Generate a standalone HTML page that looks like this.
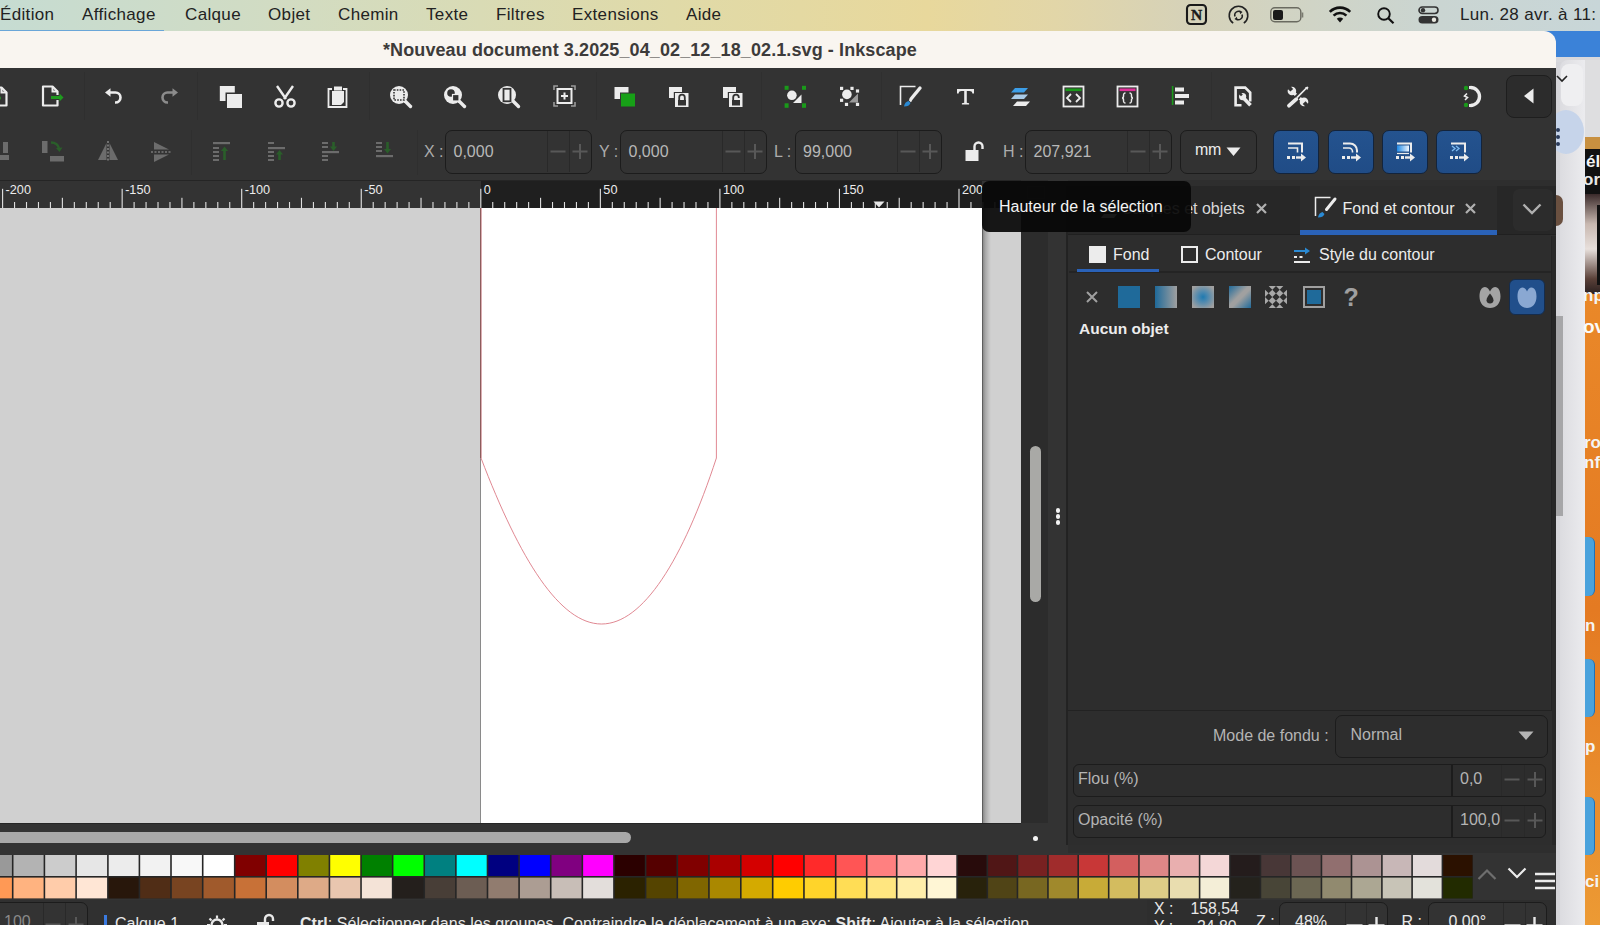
<!DOCTYPE html><html><head><meta charset="utf-8"><style>
*{margin:0;padding:0;box-sizing:border-box}
html,body{width:1600px;height:925px;overflow:hidden;background:#2e2e2e;font-family:"Liberation Sans",sans-serif}
.a{position:absolute}
.t{position:absolute;white-space:nowrap}
svg{position:absolute;overflow:visible}
</style></head><body>
<div class="a" style="left:1556px;top:31px;width:44px;height:894px;background:linear-gradient(90deg,#d4d4d8,#e6e6ea)"></div>
<div class="a" style="left:1530px;top:31px;width:70px;height:29px;background:#3b82d8"></div>
<div class="a" style="left:1556px;top:57px;width:44px;height:5px;background:#d8d8dc"></div>
<div class="a" style="left:1560px;top:60px;width:26px;height:865px;background:linear-gradient(90deg,#dcdce0,#ececef);border-top-left-radius:8px"></div>
<div class="a" style="left:1561px;top:64px;width:22px;height:42px;background:#efeff1;border-radius:8px"></div>
<svg style="left:1556px;top:74px" width="12" height="10" viewBox="0 0 12 10"><path d="M1 2l5 5 5-5" fill="none" stroke="#222" stroke-width="1.6"/></svg>
<div class="a" style="left:1548px;top:110px;width:36px;height:44px;border-radius:50%;background:#c6d4ea"></div>
<div class="a" style="left:1556px;top:316px;width:7px;height:200px;background:#a6a6a8"></div>
<div class="a" style="left:1556px;top:128px;width:4px;height:4px;border-radius:50%;background:#2a3a5a"></div>
<div class="a" style="left:1556px;top:135px;width:4px;height:4px;border-radius:50%;background:#2a3a5a"></div>
<div class="a" style="left:1556px;top:142px;width:4px;height:4px;border-radius:50%;background:#2a3a5a"></div>
<div class="a" style="left:1585px;top:60px;width:15px;height:77px;background:#dedee0"></div>
<div class="a" style="left:1585px;top:137px;width:15px;height:788px;background:linear-gradient(180deg,#ec8f2c,#e47a22 60%,#ec9a34)"></div>
<div class="a" style="left:1585px;top:137px;width:15px;height:12px;background:#c89040"></div>
<div class="a" style="left:1585px;top:149px;width:15px;height:45px;background:#111"></div>
<div class="t" style="left:1586px;top:152px;font-size:17px;font-weight:bold;color:#f4f4f4">éli</div>
<div class="t" style="left:1583px;top:170px;font-size:17px;font-weight:bold;color:#e8e8e8">or</div>
<div class="a" style="left:1585px;top:194px;width:15px;height:100px;background:linear-gradient(180deg,#3a2a2a,#c8b8b0 30%,#e8e0dc 55%,#5a4038 85%,#2a2020)"></div>
<div class="a" style="left:1597px;top:205px;width:3px;height:80px;background:#111"></div>
<div class="t" style="left:1583px;top:286px;font-size:17px;font-weight:bold;color:#f4f4f4">np</div>
<div class="t" style="left:1583px;top:316px;font-size:19px;font-weight:bold;color:#fafafa">ov</div>
<div class="t" style="left:1584px;top:433px;font-size:17px;font-weight:bold;color:#f4f4f4">ro</div>
<div class="t" style="left:1584px;top:453px;font-size:17px;font-weight:bold;color:#f4f4f4">nfi</div>
<div class="t" style="left:1585px;top:616px;font-size:17px;font-weight:bold;color:#f4f4f4">n</div>
<div class="t" style="left:1585px;top:737px;font-size:17px;font-weight:bold;color:#f4f4f4">p</div>
<div class="t" style="left:1585px;top:872px;font-size:17px;font-weight:bold;color:#f4f4f4">ci</div>
<div class="a" style="left:1585px;top:537px;width:10px;height:59px;background:#4aa2dc;border-radius:0 6px 6px 0;border-right:1.5px solid #1e70b8"></div>
<div class="a" style="left:1585px;top:659px;width:10px;height:58px;background:#4aa2dc;border-radius:0 6px 6px 0;border-right:1.5px solid #1e70b8"></div>
<div class="a" style="left:1585px;top:797px;width:10px;height:58px;background:#4aa2dc;border-radius:0 6px 6px 0;border-right:1.5px solid #1e70b8"></div>
<div class="a" style="left:0;top:0;width:1600px;height:31px;background:linear-gradient(90deg,#c6dcd2 0%,#d2dcc2 18%,#e0daa8 42%,#e8d89c 58%,#e2d6a8 66%,#d6d2b8 74%,#d0d4c6 82%,#cad5d2 90%,#c8d6d8 100%)"></div>
<div class="a" style="left:0;top:30px;width:164px;height:2px;background:#6aa6d8"></div>
<div class="t" style="left:0px;top:5px;font-size:17px;letter-spacing:0.35px;color:#222">Édition</div>
<div class="t" style="left:82px;top:5px;font-size:17px;letter-spacing:0.35px;color:#222">Affichage</div>
<div class="t" style="left:185px;top:5px;font-size:17px;letter-spacing:0.35px;color:#222">Calque</div>
<div class="t" style="left:268px;top:5px;font-size:17px;letter-spacing:0.35px;color:#222">Objet</div>
<div class="t" style="left:338px;top:5px;font-size:17px;letter-spacing:0.35px;color:#222">Chemin</div>
<div class="t" style="left:426px;top:5px;font-size:17px;letter-spacing:0.35px;color:#222">Texte</div>
<div class="t" style="left:496px;top:5px;font-size:17px;letter-spacing:0.35px;color:#222">Filtres</div>
<div class="t" style="left:572px;top:5px;font-size:17px;letter-spacing:0.35px;color:#222">Extensions</div>
<div class="t" style="left:686px;top:5px;font-size:17px;letter-spacing:0.35px;color:#222">Aide</div>
<div class="t" style="left:1460px;top:5px;font-size:17px;letter-spacing:0.35px;color:#222">Lun. 28 avr. à 11:</div>
<svg style="left:1186px;top:4px" width="21" height="21" viewBox="0 0 21 21"><rect x="1" y="1" width="19" height="19" rx="3.5" fill="none" stroke="#1a1a1a" stroke-width="2.1"/><text x="10.5" y="16" font-family="Liberation Serif" font-weight="bold" font-size="15.5" text-anchor="middle" fill="#1a1a1a" stroke="#1a1a1a" stroke-width="0.4">N</text></svg>
<svg style="left:1228px;top:5px" width="21" height="21" viewBox="0 0 21 21"><path d="M5.2 18.2A9.3 9.3 0 1 1 15.8 18.2" fill="none" stroke="#222" stroke-width="1.6"/><path d="M7 11.5A3.8 3.8 0 0 1 13 7.2" fill="none" stroke="#222" stroke-width="1.5"/><path d="M14 9.5A3.8 3.8 0 0 1 8 13.8" fill="none" stroke="#222" stroke-width="1.5"/><path d="M11.5 5.2l3 1.8-2.4 2.2z" fill="#222"/><path d="M9.5 15.8l-3-1.8 2.4-2.2z" fill="#222"/></svg>
<svg style="left:1270px;top:7px" width="35" height="16" viewBox="0 0 35 16"><rect x="0.8" y="0.8" width="30" height="14" rx="4" fill="none" stroke="#6a6a60" stroke-width="1.4"/><rect x="3" y="3" width="10" height="10" rx="2" fill="#1a1a1a"/><path d="M32.5 5.5v5" stroke="#7a7a70" stroke-width="1.6"/></svg>
<svg style="left:1328px;top:6px" width="24" height="17" viewBox="0 0 24 17"><path d="M12 16.5 L8.8 12.8 A4.5 4.5 0 0 1 15.2 12.8 Z" fill="#111"/><path d="M5.6 9.6 A9 9 0 0 1 18.4 9.6" fill="none" stroke="#111" stroke-width="2.6"/><path d="M1.8 5.8 A14.5 14.5 0 0 1 22.2 5.8" fill="none" stroke="#111" stroke-width="2.6"/></svg>
<svg style="left:1377px;top:7px" width="18" height="17" viewBox="0 0 18 17"><circle cx="7" cy="7" r="5.8" fill="none" stroke="#111" stroke-width="1.9"/><path d="M11.3 11.3 L16.5 16.3" stroke="#111" stroke-width="2.2"/></svg>
<svg style="left:1418px;top:6px" width="21" height="18" viewBox="0 0 21 18"><rect x="1" y="1" width="19" height="6.5" rx="3.25" fill="none" stroke="#333" stroke-width="1.6"/><circle cx="5" cy="4.25" r="2.2" fill="#333"/><rect x="0.5" y="10" width="20" height="7.5" rx="3.75" fill="#333"/><circle cx="16" cy="13.75" r="2.2" fill="#e8e8e0"/></svg>
<div class="a" style="left:0;top:31px;width:1556px;height:37px;background:#f9f5f0;border-top-right-radius:12px"></div>
<div class="t" style="left:383px;top:40px;font-size:18px;font-weight:bold;letter-spacing:0.1px;color:#3d3b3a">*Nouveau document 3.2025_04_02_12_18_02.1.svg - Inkscape</div>
<div class="a" style="left:0;top:68px;width:1556px;height:112px;background:#333333"></div>
<div class="a" style="left:84px;top:72px;width:1px;height:48px;background:#2f2f2f"></div>
<div class="a" style="left:197px;top:72px;width:1px;height:48px;background:#2f2f2f"></div>
<div class="a" style="left:369px;top:72px;width:1px;height:48px;background:#2f2f2f"></div>
<div class="a" style="left:596px;top:72px;width:1px;height:48px;background:#2f2f2f"></div>
<div class="a" style="left:761px;top:72px;width:1px;height:48px;background:#2f2f2f"></div>
<div class="a" style="left:881px;top:72px;width:1px;height:48px;background:#2f2f2f"></div>
<div class="a" style="left:1211px;top:72px;width:1px;height:48px;background:#2f2f2f"></div>
<svg style="left:-10px;top:86px" width="20" height="21" viewBox="0 0 20 21"><path d="M1.5 1.5h10l5 5v13h-15z" fill="none" stroke="#ececec" stroke-width="2.2" stroke-linejoin="round"/><path d="M11.5 1.5v5h5" fill="none" stroke="#ececec" stroke-width="2"/><circle cx="9" cy="12" r="2" fill="#2a8a2a"/></svg>
<svg style="left:41px;top:85px" width="25" height="22" viewBox="0 0 25 22"><path d="M2 1.5h9.5l5 5v14h-14.5z" fill="none" stroke="#ececec" stroke-width="2.2" stroke-linejoin="round"/><path d="M11.5 1.5v5h5" fill="none" stroke="#ececec" stroke-width="2"/><rect x="10" y="10" width="10" height="5" fill="#333333"/><path d="M10 12.5h10" stroke="#1f9a1f" stroke-width="3"/><path d="M18.5 8.5l4 4-4 4z" fill="#1f9a1f"/></svg>
<svg style="left:104px;top:88px" width="20" height="17" viewBox="0 0 20 17"><path d="M4 4.5h7.5a5 5 0 0 1 0 10h-0.5" fill="none" stroke="#ececec" stroke-width="2.6"/><path d="M1 4.5l5.5-4.2v8.4z" fill="#ececec"/></svg>
<svg style="left:159px;top:88px" width="20" height="17" viewBox="0 0 20 17"><path d="M16 4.5h-7.5a5 5 0 0 0 0 10h0.5" fill="none" stroke="#8c8c8c" stroke-width="2.6"/><path d="M19 4.5l-5.5-4.2v8.4z" fill="#8c8c8c"/></svg>
<svg style="left:219px;top:85px" width="24" height="23" viewBox="0 0 24 23"><rect x="0.8" y="1" width="15" height="15" fill="#ececec"/><rect x="6.5" y="7.5" width="17" height="15.5" fill="#333333"/><rect x="8" y="9" width="15" height="14" fill="#ececec"/></svg>
<svg style="left:273px;top:85px" width="24" height="23" viewBox="0 0 24 23"><path d="M4 1l9 13M20 1l-9 13" stroke="#ececec" stroke-width="2.4"/><circle cx="6" cy="18" r="3.6" fill="none" stroke="#ececec" stroke-width="2.4"/><circle cx="18" cy="18" r="3.6" fill="none" stroke="#ececec" stroke-width="2.4"/></svg>
<svg style="left:327px;top:85px" width="22" height="23" viewBox="0 0 22 23"><path d="M5 4h-3.5v18h18v-18h-3.5" fill="none" stroke="#ececec" stroke-width="1.8"/><rect x="7" y="1.5" width="8" height="4" fill="#ececec"/><path d="M5 6h12v11l-3 3h-9z" fill="#ececec"/></svg>
<svg style="left:389px;top:85px" width="24" height="24" viewBox="0 0 24 24"><circle cx="10" cy="10" r="9" fill="#ececec"/><path d="M16 16l5.5 5.5" stroke="#ececec" stroke-width="3.4" stroke-linecap="round"/><rect x="5" y="5" width="10" height="10" fill="none" stroke="#333333" stroke-width="1.6" stroke-dasharray="1.6 1.2"/></svg>
<svg style="left:443px;top:85px" width="24" height="24" viewBox="0 0 24 24"><circle cx="10" cy="10" r="9" fill="#ececec"/><path d="M16 16l5.5 5.5" stroke="#ececec" stroke-width="3.4" stroke-linecap="round"/><circle cx="8" cy="8" r="3.8" fill="#333333"/><rect x="9.5" y="9.5" width="6.5" height="6.5" fill="#333333" stroke="#ececec" stroke-width="1.2"/></svg>
<svg style="left:497px;top:85px" width="24" height="24" viewBox="0 0 24 24"><circle cx="10" cy="10" r="9" fill="#ececec"/><path d="M16 16l5.5 5.5" stroke="#ececec" stroke-width="3.4" stroke-linecap="round"/><rect x="6.5" y="3.8" width="7" height="12.5" fill="none" stroke="#333333" stroke-width="1.8"/></svg>
<svg style="left:553px;top:85px" width="23" height="22" viewBox="0 0 23 22"><path d="M1 5V1h4M18 1h4v4M22 17v4h-4M5 21H1v-4" fill="none" stroke="#9a9a9a" stroke-width="1.6"/><rect x="4.5" y="4" width="14" height="14" fill="none" stroke="#ececec" stroke-width="2"/><path d="M11.5 7.5v7M8 11h7" stroke="#ececec" stroke-width="2"/></svg>
<svg style="left:613px;top:86px" width="24" height="22" viewBox="0 0 24 22"><rect x="1.5" y="1" width="14" height="12" fill="#ececec"/><rect x="7" y="6.5" width="16" height="15" fill="#333333"/><rect x="8" y="7.5" width="14" height="13" fill="#17a017"/></svg>
<svg style="left:668px;top:86px" width="22" height="22" viewBox="0 0 22 22"><rect x="1" y="1" width="13" height="11" fill="#ececec"/><rect x="5.8" y="6" width="15.5" height="16" fill="#333333"/><rect x="7" y="7" width="13.5" height="14" fill="#ececec"/><rect x="10" y="14" width="8" height="5.5" fill="#333333"/><path d="M11.2 14.5v-3a2.8 2.8 0 0 1 5.6 0v3" fill="none" stroke="#333333" stroke-width="1.8"/></svg>
<svg style="left:722px;top:86px" width="22" height="22" viewBox="0 0 22 22"><rect x="1" y="1" width="13" height="11" fill="#ececec"/><rect x="5.8" y="6" width="15.5" height="16" fill="#333333"/><rect x="7" y="7" width="13.5" height="14" fill="#ececec"/><rect x="10" y="14" width="8" height="5.5" fill="#333333"/><path d="M11.2 14.5v-3a2.8 2.8 0 0 1 5.6 0v0.5" fill="none" stroke="#333333" stroke-width="1.8"/></svg>
<svg style="left:783px;top:85px" width="26" height="24" viewBox="0 0 26 24"><path d="M18.5 9.5v8.5h-8.5z" fill="#ececec"/><circle cx="8.9" cy="10.3" r="5.6" fill="#333333"/><circle cx="8.9" cy="10.3" r="4.8" fill="#ececec"/><rect x="1.6" y="0.8" width="4" height="4" fill="#1a9a1a"/><rect x="19" y="0.8" width="4" height="4" fill="#1a9a1a"/><rect x="1.6" y="18.3" width="4" height="4.5" fill="#1a9a1a"/><rect x="19" y="18.3" width="4" height="4.5" fill="#1a9a1a"/></svg>
<svg style="left:838px;top:85px" width="24" height="24" viewBox="0 0 24 24"><path d="M20 8.5v9h-9z" fill="#9a9a9a"/><circle cx="8.9" cy="9.4" r="5.6" fill="#333333"/><circle cx="8.9" cy="9.4" r="4.8" fill="#ececec"/><rect x="2" y="1.8" width="3.2" height="3.2" fill="#ececec"/><rect x="12.4" y="1.8" width="3.2" height="3.2" fill="#ececec"/><rect x="17.9" y="4.4" width="3.2" height="3.2" fill="#ececec"/><rect x="2" y="13.7" width="3.2" height="3.2" fill="#ececec"/><rect x="6.9" y="17.8" width="3.2" height="3.2" fill="#ececec"/><rect x="17.9" y="17.8" width="3.2" height="3.2" fill="#ececec"/></svg>
<svg style="left:899px;top:85px" width="24" height="23" viewBox="0 0 24 23"><path d="M1.5 20V1.5h15" fill="none" stroke="#ececec" stroke-width="1.6"/><path d="M21 3l-9 11" stroke="#ececec" stroke-width="3.4" stroke-linecap="round"/><path d="M10.5 14.5l2 2" stroke="#ececec" stroke-width="2"/><path d="M5 21.5c0.5-3 2-5 4.5-5.5l2 2c-0.8 2.5-3 3.5-6.5 3.5z" fill="#2a8ad4"/></svg>
<svg style="left:956px;top:88px" width="19" height="17" viewBox="0 0 19 17"><path d="M1 1h17v4.5h-1.6c-0.4-2-1-2.6-3-2.6h-2.6v11.8l2.3 0.6v1.2h-7.2v-1.2l2.3-0.6v-11.8h-2.6c-2 0-2.6 0.6-3 2.6h-1.6z" fill="#ececec"/></svg>
<svg style="left:1008px;top:87px" width="24" height="20" viewBox="0 0 24 20"><path d="M3 5.5l4-4.5h13l-4 4.5z" fill="#3c9ee8"/><path d="M3 12l4-4.5h13l-4 4.5z" fill="#a9cbe8"/><path d="M5 19l4-4.5h13l-4 4.5z" fill="#ececec"/></svg>
<svg style="left:1062px;top:85px" width="24" height="23" viewBox="0 0 24 23"><rect x="1.5" y="1.5" width="20" height="20" fill="none" stroke="#ececec" stroke-width="1.8"/><rect x="3.5" y="3.5" width="16" height="2.6" fill="#1a9a1a"/><path d="M9 9l-4 4 4 4M14 9l4 4-4 4" fill="none" stroke="#ececec" stroke-width="1.8"/></svg>
<svg style="left:1116px;top:85px" width="24" height="23" viewBox="0 0 24 23"><rect x="1.5" y="1.5" width="20" height="20" fill="none" stroke="#ececec" stroke-width="1.8"/><rect x="3.5" y="3.5" width="16" height="2.6" fill="#e0309a"/><path d="M9.5 8c-2 0-2 1-2 3s-1 2-1.5 2c0.5 0 1.5 0 1.5 2s0 3 2 3M13.5 8c2 0 2 1 2 3s1 2 1.5 2c-0.5 0-1.5 0-1.5 2s0 3-2 3" fill="none" stroke="#ececec" stroke-width="1.5"/></svg>
<svg style="left:1171px;top:85px" width="22" height="22" viewBox="0 0 22 22"><rect x="0.8" y="1" width="1.6" height="19" fill="#1a9a1a"/><rect x="4" y="2.5" width="9" height="4" fill="#ececec"/><rect x="4" y="9" width="14" height="4" fill="#ececec"/><rect x="4" y="15.5" width="9" height="4" fill="#ececec"/></svg>
<svg style="left:1234px;top:86px" width="20" height="21" viewBox="0 0 20 21"><path d="M7.5 19.3H1.6V1.6h9.6l5 5v9" fill="none" stroke="#ececec" stroke-width="2.6" stroke-linejoin="miter"/><circle cx="8.6" cy="10.6" r="3.6" fill="#ececec"/><path d="M6.6 6.2l2.2 2.2-1.8 1.8-2.2-2.2z" fill="#333333"/><path d="M9.5 12l7 7.3" stroke="#ececec" stroke-width="3.6"/></svg>
<svg style="left:1286px;top:85px" width="24" height="23" viewBox="0 0 24 23"><path d="M5.9 6l4 3.8M13.8 13.3l4.2 3.6" stroke="#ececec" stroke-width="3.2"/><circle cx="5.9" cy="6" r="4.3" fill="#ececec"/><path d="M1 3.2l2.8-2.6 3.4 3.4-2.8 2.6z" fill="#333333"/><circle cx="18" cy="16.9" r="4.3" fill="#ececec"/><path d="M22.9 19.7l-2.8 2.6-3.4-3.4 2.8-2.6z" fill="#333333"/><path d="M20.5 3L11 12.6" stroke="#ececec" stroke-width="1.7"/><path d="M19 2.6l2.5-1.2 1 1-1.2 2.5z" fill="#ececec"/><path d="M10.3 14.2L3 20.7" stroke="#ececec" stroke-width="3.8" stroke-linecap="round"/></svg>
<svg style="left:1461px;top:85px" width="24" height="23" viewBox="0 0 24 23"><path d="M9.5 2.5a9 9 0 0 1 0 18" fill="none" stroke="#ececec" stroke-width="3.4"/><rect x="8" y="1" width="2.5" height="3" fill="#ececec"/><rect x="8" y="19" width="2.5" height="3" fill="#ececec"/><circle cx="5" cy="3" r="2.2" fill="#1a9a1a"/><circle cx="5" cy="20" r="2.2" fill="#1a9a1a"/><path d="M6 8.5l-2.5 2.5 3 1.5-2.5 2.5" fill="none" stroke="#ececec" stroke-width="1.6"/></svg>
<div class="a" style="left:1506px;top:75px;width:46px;height:43px;border:1.5px solid #1e1e1e;border-radius:8px;background:#2c2c2c"></div>
<svg style="left:1523px;top:88px" width="12" height="17" viewBox="0 0 12 17"><path d="M10.5 0.5v15l-9.5-7.5z" fill="#ececec"/></svg>
<div class="a" style="left:191px;top:130px;width:1px;height:45px;background:#2f2f2f"></div>
<div class="a" style="left:417px;top:130px;width:1px;height:45px;background:#2f2f2f"></div>
<svg style="left:-12px;top:140px" width="23" height="23" viewBox="0 0 23 23"><rect x="2" y="1" width="5" height="12" fill="#6c6c6c"/><rect x="9" y="15" width="12" height="5" fill="#6c6c6c"/><rect x="15" y="2" width="5" height="11" fill="#6c6c6c"/></svg>
<svg style="left:41px;top:140px" width="24" height="23" viewBox="0 0 24 23"><rect x="1" y="1" width="5.5" height="12" fill="#6c6c6c"/><rect x="9" y="16" width="14" height="5.5" fill="#6c6c6c"/><path d="M10 2.5c4 0 7 2 8 6" fill="none" stroke="#2a5e2a" stroke-width="2.4"/><path d="M15 8l3.5 4 3-4.5z" fill="#2a5e2a"/></svg>
<svg style="left:97px;top:141px" width="22" height="21" viewBox="0 0 22 21"><path d="M9.5 2L1 19h8.5z" fill="#6c6c6c"/><path d="M12.5 2L21 19h-8.5z" fill="#6c6c6c"/><path d="M11 0v21" stroke="#9a9a9a" stroke-width="1.2" stroke-dasharray="2 1.5"/></svg>
<svg style="left:151px;top:141px" width="21" height="22" viewBox="0 0 21 22"><path d="M3 1l15 7.5H3z" fill="#6c6c6c"/><path d="M3 21l15-7.5H3z" fill="#6c6c6c"/><path d="M0 11h21" stroke="#9a9a9a" stroke-width="1.2" stroke-dasharray="2 1.5"/></svg>
<svg style="left:212px;top:141px" width="20" height="21" viewBox="0 0 20 21"><rect x="1" y="1" width="17" height="2.2" fill="#6c6c6c"/><rect x="1" y="6" width="6" height="2" fill="#6c6c6c"/><rect x="1" y="10" width="6" height="2" fill="#6c6c6c"/><rect x="1" y="14" width="6" height="2" fill="#6c6c6c"/><rect x="1" y="18" width="6" height="2" fill="#6c6c6c"/><path d="M12.5 19V8" stroke="#2a5e2a" stroke-width="2.6"/><path d="M9 10l3.5-4.5 3.5 4.5z" fill="#2a5e2a"/></svg>
<svg style="left:267px;top:141px" width="20" height="21" viewBox="0 0 20 21"><rect x="1" y="1" width="6" height="2" fill="#6c6c6c"/><rect x="1" y="6" width="17" height="2.2" fill="#6c6c6c"/><rect x="1" y="10" width="6" height="2" fill="#6c6c6c"/><rect x="1" y="14" width="6" height="2" fill="#6c6c6c"/><rect x="1" y="18" width="6" height="2" fill="#6c6c6c"/><path d="M12.5 19V12" stroke="#2a5e2a" stroke-width="2.6"/><path d="M9 13.5l3.5-4.5 3.5 4.5z" fill="#2a5e2a"/></svg>
<svg style="left:321px;top:141px" width="20" height="21" viewBox="0 0 20 21"><rect x="1" y="1" width="6" height="2" fill="#6c6c6c"/><rect x="1" y="5" width="6" height="2" fill="#6c6c6c"/><rect x="1" y="10" width="17" height="2.2" fill="#6c6c6c"/><rect x="1" y="14" width="6" height="2" fill="#6c6c6c"/><rect x="1" y="18" width="6" height="2" fill="#6c6c6c"/><path d="M12.5 1V7" stroke="#2a5e2a" stroke-width="2.6"/><path d="M9 5.5l3.5 4.5 3.5-4.5z" fill="#2a5e2a"/></svg>
<svg style="left:375px;top:141px" width="20" height="21" viewBox="0 0 20 21"><rect x="1" y="1" width="6" height="2" fill="#6c6c6c"/><rect x="1" y="5" width="6" height="2" fill="#6c6c6c"/><rect x="1" y="9" width="6" height="2" fill="#6c6c6c"/><rect x="1" y="14" width="17" height="2.2" fill="#6c6c6c"/><path d="M12.5 1V9" stroke="#2a5e2a" stroke-width="2.6"/><path d="M9 8l3.5 4.5 3.5-4.5z" fill="#2a5e2a"/></svg>
<div class="t" style="left:424px;top:142.5px;font-size:16px;color:#acacac">X :</div>
<div class="a" style="left:445px;top:130px;width:147px;height:43.5px;border:1.5px solid #1c1c1c;border-radius:7px;background:#333333"></div>
<div class="a" style="left:547px;top:131px;width:1px;height:41px;background:#292929"></div>
<div class="a" style="left:569px;top:131px;width:1px;height:41px;background:#292929"></div>
<div class="t" style="left:453.5px;top:142.5px;font-size:16px;color:#b8b8b8">0,000</div>
<svg style="left:550px;top:143px" width="17" height="17" viewBox="0 0 17 17"><path d="M0.5 8.5h15" stroke="#585858" stroke-width="2"/></svg>
<svg style="left:572px;top:143px" width="17" height="17" viewBox="0 0 17 17"><path d="M0.5 8.5h15M8 1v15" stroke="#585858" stroke-width="2"/></svg>
<div class="t" style="left:599px;top:142.5px;font-size:16px;color:#acacac">Y :</div>
<div class="a" style="left:620px;top:130px;width:147px;height:43.5px;border:1.5px solid #1c1c1c;border-radius:7px;background:#333333"></div>
<div class="a" style="left:722px;top:131px;width:1px;height:41px;background:#292929"></div>
<div class="a" style="left:744px;top:131px;width:1px;height:41px;background:#292929"></div>
<div class="t" style="left:628.5px;top:142.5px;font-size:16px;color:#b8b8b8">0,000</div>
<svg style="left:725px;top:143px" width="17" height="17" viewBox="0 0 17 17"><path d="M0.5 8.5h15" stroke="#585858" stroke-width="2"/></svg>
<svg style="left:747px;top:143px" width="17" height="17" viewBox="0 0 17 17"><path d="M0.5 8.5h15M8 1v15" stroke="#585858" stroke-width="2"/></svg>
<div class="t" style="left:774px;top:142.5px;font-size:16px;color:#acacac">L :</div>
<div class="a" style="left:794.5px;top:130px;width:147px;height:43.5px;border:1.5px solid #1c1c1c;border-radius:7px;background:#333333"></div>
<div class="a" style="left:896.5px;top:131px;width:1px;height:41px;background:#292929"></div>
<div class="a" style="left:918.5px;top:131px;width:1px;height:41px;background:#292929"></div>
<div class="t" style="left:803.0px;top:142.5px;font-size:16px;color:#b8b8b8">99,000</div>
<svg style="left:899.5px;top:143px" width="17" height="17" viewBox="0 0 17 17"><path d="M0.5 8.5h15" stroke="#585858" stroke-width="2"/></svg>
<svg style="left:921.5px;top:143px" width="17" height="17" viewBox="0 0 17 17"><path d="M0.5 8.5h15M8 1v15" stroke="#585858" stroke-width="2"/></svg>
<div class="t" style="left:1003px;top:142.5px;font-size:16px;color:#acacac">H :</div>
<div class="a" style="left:1025px;top:130px;width:147px;height:43.5px;border:1.5px solid #1c1c1c;border-radius:7px;background:#333333"></div>
<div class="a" style="left:1127px;top:131px;width:1px;height:41px;background:#292929"></div>
<div class="a" style="left:1149px;top:131px;width:1px;height:41px;background:#292929"></div>
<div class="t" style="left:1033.5px;top:142.5px;font-size:16px;color:#b8b8b8">207,921</div>
<svg style="left:1130px;top:143px" width="17" height="17" viewBox="0 0 17 17"><path d="M0.5 8.5h15" stroke="#585858" stroke-width="2"/></svg>
<svg style="left:1152px;top:143px" width="17" height="17" viewBox="0 0 17 17"><path d="M0.5 8.5h15M8 1v15" stroke="#585858" stroke-width="2"/></svg>
<svg style="left:965px;top:141px" width="19" height="21" viewBox="0 0 19 21"><rect x="0.5" y="9" width="13" height="11" fill="#ececec"/><path d="M9.5 9V5.5a4 4 0 0 1 8 0V8" fill="none" stroke="#ececec" stroke-width="2.4"/></svg>
<div class="a" style="left:1180px;top:130px;width:77px;height:43.5px;border:1.5px solid #1c1c1c;border-radius:7px;background:#323232"></div>
<div class="t" style="left:1195px;top:141px;font-size:16px;letter-spacing:-0.3px;color:#ececec">mm</div>
<svg style="left:1226px;top:147px" width="15" height="10" viewBox="0 0 15 10"><path d="M0.5 0.5h14l-7 8.5z" fill="#ececec"/></svg>
<div class="a" style="left:1273px;top:130px;width:46px;height:43.5px;border:1.5px solid #13243c;border-radius:7px;background:linear-gradient(180deg,#24538f,#204c86)"></div>
<div class="a" style="left:1327.5px;top:130px;width:46px;height:43.5px;border:1.5px solid #13243c;border-radius:7px;background:linear-gradient(180deg,#24538f,#204c86)"></div>
<div class="a" style="left:1382px;top:130px;width:46px;height:43.5px;border:1.5px solid #13243c;border-radius:7px;background:linear-gradient(180deg,#24538f,#204c86)"></div>
<div class="a" style="left:1436px;top:130px;width:46px;height:43.5px;border:1.5px solid #13243c;border-radius:7px;background:linear-gradient(180deg,#24538f,#204c86)"></div>
<svg style="left:1286px;top:141px" width="22" height="21" viewBox="0 0 22 21"><path d="M2 2.5h14v9" fill="none" stroke="#ececec" stroke-width="2"/><path d="M2 7h9.5v4.5" fill="none" stroke="#ececec" stroke-width="1.6"/><rect x="1" y="15" width="3" height="3" fill="#ececec"/><rect x="6" y="15" width="3" height="3" fill="#ececec"/><path d="M10 16.5h6" stroke="#ececec" stroke-width="2.4"/><path d="M15 12.5l5 4-5 4z" fill="#ececec"/></svg>
<svg style="left:1340.5px;top:141px" width="22" height="21" viewBox="0 0 22 21"><path d="M2 2.5h7a7 7 0 0 1 7 7v2" fill="none" stroke="#ececec" stroke-width="2"/><path d="M2 7h6a3.5 3.5 0 0 1 3.5 3.5v1" fill="none" stroke="#ececec" stroke-width="1.6"/><rect x="1" y="15" width="3" height="3" fill="#ececec"/><rect x="6" y="15" width="3" height="3" fill="#ececec"/><path d="M10 16.5h6" stroke="#ececec" stroke-width="2.4"/><path d="M15 12.5l5 4-5 4z" fill="#ececec"/></svg>
<svg style="left:1395px;top:141px" width="22" height="21" viewBox="0 0 22 21"><path d="M2 2.5h14v9" fill="none" stroke="#ececec" stroke-width="2"/><defs><linearGradient id="bg3"><stop offset="0" stop-color="#1e8ae8"/><stop offset="1" stop-color="#f0f6ff"/></linearGradient></defs><rect x="2" y="4.5" width="12" height="6" fill="url(#bg3)"/><path d="M2 12.5h12" stroke="#ececec" stroke-width="1.2"/><rect x="1" y="15" width="3" height="3" fill="#ececec"/><rect x="6" y="15" width="3" height="3" fill="#ececec"/><path d="M10 16.5h6" stroke="#ececec" stroke-width="2.4"/><path d="M15 12.5l5 4-5 4z" fill="#ececec"/></svg>
<svg style="left:1449px;top:141px" width="22" height="21" viewBox="0 0 22 21"><path d="M2 2.5h14v9" fill="none" stroke="#ececec" stroke-width="2"/><path d="M3 5l3 2.5-3 2.5M7 5l3 2.5-3 2.5" fill="none" stroke="#7ab8f0" stroke-width="1.4"/><rect x="1" y="15" width="3" height="3" fill="#ececec"/><rect x="6" y="15" width="3" height="3" fill="#ececec"/><path d="M10 16.5h6" stroke="#ececec" stroke-width="2.4"/><path d="M15 12.5l5 4-5 4z" fill="#ececec"/></svg>
<div class="a" style="left:0;top:180px;width:1021px;height:28px;background:#333333;border-top:1px solid #252525"></div>
<div class="a" style="left:481px;top:181px;width:501px;height:27px;background:#1f1f1f"></div>
<div class="t" style="left:5.60px;top:183px;font-size:12.7px;color:#ececec">-200</div>
<div class="t" style="left:125.15px;top:183px;font-size:12.7px;color:#ececec">-150</div>
<div class="t" style="left:244.70px;top:183px;font-size:12.7px;color:#ececec">-100</div>
<div class="t" style="left:364.25px;top:183px;font-size:12.7px;color:#ececec">-50</div>
<div class="t" style="left:483.80px;top:183px;font-size:12.7px;color:#ececec">0</div>
<div class="t" style="left:603.35px;top:183px;font-size:12.7px;color:#ececec">50</div>
<div class="t" style="left:722.90px;top:183px;font-size:12.7px;color:#ececec">100</div>
<div class="t" style="left:842.45px;top:183px;font-size:12.7px;color:#ececec">150</div>
<div class="t" style="left:962.00px;top:183px;font-size:12.7px;color:#ececec">200</div>
<svg style="left:0;top:180px" width="1021" height="28"><rect x="2.05" y="8.8" width="1.1" height="19.2" fill="#e4e4e4"/><rect x="14.01" y="22" width="1.1" height="6" fill="#e0e0e0"/><rect x="25.96" y="22" width="1.1" height="6" fill="#e0e0e0"/><rect x="37.92" y="22" width="1.1" height="6" fill="#e0e0e0"/><rect x="49.87" y="22" width="1.1" height="6" fill="#e0e0e0"/><rect x="61.83" y="17.8" width="1.1" height="10.2" fill="#e0e0e0"/><rect x="73.78" y="22" width="1.1" height="6" fill="#e0e0e0"/><rect x="85.74" y="22" width="1.1" height="6" fill="#e0e0e0"/><rect x="97.69" y="22" width="1.1" height="6" fill="#e0e0e0"/><rect x="109.64" y="22" width="1.1" height="6" fill="#e0e0e0"/><rect x="121.60" y="8.8" width="1.1" height="19.2" fill="#e4e4e4"/><rect x="133.56" y="22" width="1.1" height="6" fill="#e0e0e0"/><rect x="145.51" y="22" width="1.1" height="6" fill="#e0e0e0"/><rect x="157.46" y="22" width="1.1" height="6" fill="#e0e0e0"/><rect x="169.42" y="22" width="1.1" height="6" fill="#e0e0e0"/><rect x="181.38" y="17.8" width="1.1" height="10.2" fill="#e0e0e0"/><rect x="193.33" y="22" width="1.1" height="6" fill="#e0e0e0"/><rect x="205.29" y="22" width="1.1" height="6" fill="#e0e0e0"/><rect x="217.24" y="22" width="1.1" height="6" fill="#e0e0e0"/><rect x="229.19" y="22" width="1.1" height="6" fill="#e0e0e0"/><rect x="241.15" y="8.8" width="1.1" height="19.2" fill="#e4e4e4"/><rect x="253.10" y="22" width="1.1" height="6" fill="#e0e0e0"/><rect x="265.06" y="22" width="1.1" height="6" fill="#e0e0e0"/><rect x="277.01" y="22" width="1.1" height="6" fill="#e0e0e0"/><rect x="288.97" y="22" width="1.1" height="6" fill="#e0e0e0"/><rect x="300.93" y="17.8" width="1.1" height="10.2" fill="#e0e0e0"/><rect x="312.88" y="22" width="1.1" height="6" fill="#e0e0e0"/><rect x="324.83" y="22" width="1.1" height="6" fill="#e0e0e0"/><rect x="336.79" y="22" width="1.1" height="6" fill="#e0e0e0"/><rect x="348.75" y="22" width="1.1" height="6" fill="#e0e0e0"/><rect x="360.70" y="8.8" width="1.1" height="19.2" fill="#e4e4e4"/><rect x="372.66" y="22" width="1.1" height="6" fill="#e0e0e0"/><rect x="384.61" y="22" width="1.1" height="6" fill="#e0e0e0"/><rect x="396.56" y="22" width="1.1" height="6" fill="#e0e0e0"/><rect x="408.52" y="22" width="1.1" height="6" fill="#e0e0e0"/><rect x="420.48" y="17.8" width="1.1" height="10.2" fill="#e0e0e0"/><rect x="432.43" y="22" width="1.1" height="6" fill="#e0e0e0"/><rect x="444.38" y="22" width="1.1" height="6" fill="#e0e0e0"/><rect x="456.34" y="22" width="1.1" height="6" fill="#e0e0e0"/><rect x="468.30" y="22" width="1.1" height="6" fill="#e0e0e0"/><rect x="480.25" y="8.8" width="1.1" height="19.2" fill="#e4e4e4"/><rect x="492.20" y="22" width="1.1" height="6" fill="#e0e0e0"/><rect x="504.16" y="22" width="1.1" height="6" fill="#e0e0e0"/><rect x="516.12" y="22" width="1.1" height="6" fill="#e0e0e0"/><rect x="528.07" y="22" width="1.1" height="6" fill="#e0e0e0"/><rect x="540.03" y="17.8" width="1.1" height="10.2" fill="#e0e0e0"/><rect x="551.98" y="22" width="1.1" height="6" fill="#e0e0e0"/><rect x="563.94" y="22" width="1.1" height="6" fill="#e0e0e0"/><rect x="575.89" y="22" width="1.1" height="6" fill="#e0e0e0"/><rect x="587.85" y="22" width="1.1" height="6" fill="#e0e0e0"/><rect x="599.80" y="8.8" width="1.1" height="19.2" fill="#e4e4e4"/><rect x="611.76" y="22" width="1.1" height="6" fill="#e0e0e0"/><rect x="623.71" y="22" width="1.1" height="6" fill="#e0e0e0"/><rect x="635.67" y="22" width="1.1" height="6" fill="#e0e0e0"/><rect x="647.62" y="22" width="1.1" height="6" fill="#e0e0e0"/><rect x="659.58" y="17.8" width="1.1" height="10.2" fill="#e0e0e0"/><rect x="671.53" y="22" width="1.1" height="6" fill="#e0e0e0"/><rect x="683.49" y="22" width="1.1" height="6" fill="#e0e0e0"/><rect x="695.44" y="22" width="1.1" height="6" fill="#e0e0e0"/><rect x="707.40" y="22" width="1.1" height="6" fill="#e0e0e0"/><rect x="719.35" y="8.8" width="1.1" height="19.2" fill="#e4e4e4"/><rect x="731.31" y="22" width="1.1" height="6" fill="#e0e0e0"/><rect x="743.26" y="22" width="1.1" height="6" fill="#e0e0e0"/><rect x="755.22" y="22" width="1.1" height="6" fill="#e0e0e0"/><rect x="767.17" y="22" width="1.1" height="6" fill="#e0e0e0"/><rect x="779.12" y="17.8" width="1.1" height="10.2" fill="#e0e0e0"/><rect x="791.08" y="22" width="1.1" height="6" fill="#e0e0e0"/><rect x="803.04" y="22" width="1.1" height="6" fill="#e0e0e0"/><rect x="814.99" y="22" width="1.1" height="6" fill="#e0e0e0"/><rect x="826.95" y="22" width="1.1" height="6" fill="#e0e0e0"/><rect x="838.90" y="8.8" width="1.1" height="19.2" fill="#e4e4e4"/><rect x="850.86" y="22" width="1.1" height="6" fill="#e0e0e0"/><rect x="862.81" y="22" width="1.1" height="6" fill="#e0e0e0"/><rect x="874.77" y="22" width="1.1" height="6" fill="#e0e0e0"/><rect x="886.72" y="22" width="1.1" height="6" fill="#e0e0e0"/><rect x="898.68" y="17.8" width="1.1" height="10.2" fill="#e0e0e0"/><rect x="910.63" y="22" width="1.1" height="6" fill="#e0e0e0"/><rect x="922.59" y="22" width="1.1" height="6" fill="#e0e0e0"/><rect x="934.54" y="22" width="1.1" height="6" fill="#e0e0e0"/><rect x="946.50" y="22" width="1.1" height="6" fill="#e0e0e0"/><rect x="958.45" y="8.8" width="1.1" height="19.2" fill="#e4e4e4"/><rect x="970.41" y="22" width="1.1" height="6" fill="#e0e0e0"/><rect x="982.36" y="22" width="1.1" height="6" fill="#e0e0e0"/><rect x="994.32" y="22" width="1.1" height="6" fill="#e0e0e0"/><rect x="1006.27" y="22" width="1.1" height="6" fill="#e0e0e0"/></svg>
<svg style="left:873px;top:201px" width="12" height="7" viewBox="0 0 12 7"><path d="M0.5 0.5h11l-5.5 6z" fill="#e8e8e8"/></svg>
<div class="a" style="left:0;top:208px;width:1021px;height:615px;background:#d0d0d0;overflow:hidden"><div class="a" style="left:983px;top:0;width:8px;height:615px;background:linear-gradient(90deg,#8a8a8a,#a8a8a8 30%,#c4c4c4 75%,#d0d0d0)"></div><div class="a" style="left:481px;top:-10px;width:501px;height:640px;background:#fff"></div><div class="a" style="left:982px;top:0;width:1.3px;height:615px;background:#5e5e5e"></div><div class="a" style="left:480px;top:0;width:1.2px;height:615px;background:#8a8a8a"></div></div>
<svg style="left:0;top:208px" width="1021" height="615" viewBox="0 208 1021 615"><path d="M481 208V458C520 560 560 624 601.5 624C643 624 683 560 716.4 458V208" fill="none" stroke="#dc7a86" stroke-width="0.9"/><path d="M480.6 208V458" stroke="#8c5c5c" stroke-width="1.2"/></svg>
<div class="a" style="left:1021px;top:180px;width:27px;height:673px;background:#2c2c2c"></div>
<div class="a" style="left:1048px;top:180px;width:20px;height:673px;background:#333333"></div>
<div class="a" style="left:1030px;top:446px;width:11px;height:156px;border-radius:5.5px;background:#a9a9a6"></div>
<div class="a" style="left:1055.5px;top:508px;width:4.5px;height:4.5px;border-radius:50%;background:#f4f4f4"></div>
<div class="a" style="left:1055.5px;top:514px;width:4.5px;height:4.5px;border-radius:50%;background:#f4f4f4"></div>
<div class="a" style="left:1055.5px;top:520px;width:4.5px;height:4.5px;border-radius:50%;background:#f4f4f4"></div>
<div class="a" style="left:0;top:823px;width:1021px;height:30px;background:#333333;border-top:1.5px solid #262626"></div>
<div class="a" style="left:-10px;top:832px;width:641px;height:11px;border-radius:5.5px;background:#a8a8a8"></div>
<div class="a" style="left:1021px;top:823px;width:27px;height:30px;background:#333333"></div>
<div class="a" style="left:1033px;top:835.5px;width:5px;height:5px;border-radius:50%;background:#f4f4f4"></div>
<div class="a" style="left:1066px;top:186px;width:490px;height:658.5px;background:#2d2d2d;border-left:2px solid #232323"></div>
<div class="a" style="left:1068px;top:186px;width:488px;height:49px;background:#272727;border-bottom:1px solid #202020"></div>
<div class="a" style="left:1300px;top:186px;width:197px;height:49px;background:#2c2c2c"></div>
<div class="a" style="left:1300px;top:230px;width:197px;height:4.5px;background:#2a62b8"></div>
<div class="a" style="left:1513px;top:189px;width:40px;height:42px;border-radius:6px;background:#2c2c2c"></div>
<svg style="left:1522px;top:203px" width="20" height="12" viewBox="0 0 20 12"><path d="M1.5 1.5l8.5 8.5 8.5-8.5" fill="none" stroke="#b0b0b0" stroke-width="2.4"/></svg>
<div class="t" style="left:1121px;top:200px;font-size:16px;color:#d8d8d8">Calques et objets</div>
<svg style="left:1256px;top:203px" width="11" height="11" viewBox="0 0 11 11"><path d="M1 1l9 9M10 1l-9 9" stroke="#b0b0b0" stroke-width="2.2"/></svg>
<svg style="left:1096px;top:201px" width="22" height="18" viewBox="0 0 22 18"><path d="M3 5l3-4h13l-3 4z" fill="#3c9ee8"/><path d="M3 11l3-4h13l-3 4z" fill="#a9cbe8"/><path d="M5 17l3-4h13l-3 4z" fill="#ececec"/></svg>
<div class="a" style="left:1027px;top:186px;width:18px;height:13px;border:1.5px solid #3a3a3a"></div>
<svg style="left:1314px;top:196px" width="24" height="24" viewBox="0 0 24 24"><path d="M1.5 20V1.5h15" fill="none" stroke="#ececec" stroke-width="1.5"/><path d="M21 3l-8.5 10.5" stroke="#ececec" stroke-width="3" stroke-linecap="round"/><path d="M4 21.5c0.5-3 2-5 4.5-5.5l2 2c-0.8 2.5-3 3.5-6.5 3.5z" fill="#2a8ad4"/></svg>
<div class="t" style="left:1342.5px;top:200px;font-size:16px;color:#ececec">Fond et contour</div>
<svg style="left:1465px;top:203px" width="11" height="11" viewBox="0 0 11 11"><path d="M1 1l9 9M10 1l-9 9" stroke="#b0b0b0" stroke-width="2.2"/></svg>
<div class="a" style="left:1552px;top:236px;width:4px;height:609px;background:#272727"></div>
<div class="a" style="left:1556px;top:195px;width:7px;height:31px;border-radius:0 8px 8px 0;background:#6a5040"></div>
<div class="a" style="left:1067px;top:236px;width:485px;height:475px;border:1.5px solid #222;border-top:none;background:#2d2d2d"></div>
<div class="a" style="left:1069px;top:271px;width:482px;height:1.5px;background:#242424"></div>
<div class="a" style="left:1077px;top:268.5px;width:82px;height:3.5px;background:#2a62b8"></div>
<div class="a" style="left:1089px;top:246px;width:17px;height:17px;background:#ececec"></div>
<div class="t" style="left:1113px;top:246px;font-size:16px;color:#ececec">Fond</div>
<div class="a" style="left:1181px;top:246px;width:17px;height:17px;border:2px solid #ececec"></div>
<div class="t" style="left:1205px;top:246px;font-size:16px;color:#ececec">Contour</div>
<svg style="left:1293px;top:245px" width="20" height="20" viewBox="0 0 20 20"><path d="M1 6h13" stroke="#2a8ad4" stroke-width="2"/><path d="M12 2.5l5 3.5-5 3.5z" fill="#2a8ad4"/><rect x="1" y="11" width="3" height="2" fill="#ececec"/><rect x="6.5" y="11" width="3" height="2" fill="#ececec"/><path d="M1 17h16" stroke="#ececec" stroke-width="2"/></svg>
<div class="t" style="left:1319px;top:246px;font-size:16px;color:#ececec">Style du contour</div>
<svg style="left:1086px;top:291px" width="12" height="12" viewBox="0 0 12 12"><path d="M1 1l10 10M11 1l-10 10" stroke="#a0a0a0" stroke-width="2"/></svg>
<div class="a" style="left:1117.5px;top:286px;width:22px;height:22px;background:#1f6a9a;"></div>
<div class="a" style="left:1154.5px;top:286px;width:22px;height:22px;background:linear-gradient(90deg,#1f6a9a,#a0a0a0);"></div>
<div class="a" style="left:1192px;top:286px;width:22px;height:22px;background:radial-gradient(circle,#1f7ab0 0%,#4a88b0 30%,#a0a0a0 85%);"></div>
<div class="a" style="left:1229px;top:286px;width:22px;height:22px;background:linear-gradient(135deg,#1f6a9a 0%,#a0a0a0 45%,#a0a0a0 55%,#1f6a9a 100%);"></div>
<svg style="left:1265px;top:286px" width="22" height="22" viewBox="0 0 22 22"><rect width="22" height="22" fill="#a8a8a8"/><path d="M0 0h3.7L7.3 3.7 3.7 7.3 0 3.7zM7.3 3.7L11 0l3.7 3.7-3.7 3.7zM14.7 3.7L18.3 0H22v3.7L18.3 7.3zM3.7 7.3L7.3 11 3.7 14.7 0 11zM11 7.3l3.7 3.7-3.7 3.7-3.7-3.7zM18.3 7.3L22 11l-3.7 3.7-3.7-3.7zM7.3 18.3L3.7 22H0v-3.7l3.7-3.6zM11 14.7l3.7 3.6L11 22l-3.7-3.7zM18.3 14.7l3.7 3.6V22h-3.7l-3.6-3.7z" fill="#2d2d2d"/></svg>
<div class="a" style="left:1303px;top:286px;width:22px;height:22px;border:2px solid #a0a0a0;background:#2d2d2d"></div>
<div class="a" style="left:1307px;top:290px;width:14px;height:14px;background:#1f6a9a"></div>
<div class="t" style="left:1343.5px;top:282.5px;font-size:25px;font-weight:bold;color:#a0a0a0">?</div>
<svg style="left:1478px;top:285px" width="24" height="24" viewBox="0 0 24 24"><path d="M12 23C6 23 1.5 18.5 1.5 11.5 1.5 6 3.5 2 7 2 9.5 2 11 4.5 12 6.5 13 4.5 14.5 2 17 2 20.5 2 22.5 6 22.5 11.5 22.5 18.5 18 23 12 23z" fill="#a4a4a4"/><path d="M12 18.5c-2 0-3.5-1.3-3.5-3.3 0-2.2 2-4.8 3.5-6.7 1.5 1.9 3.5 4.5 3.5 6.7 0 2-1.5 3.3-3.5 3.3z" fill="#2d2d2d"/></svg>
<div class="a" style="left:1509px;top:279px;width:36px;height:36px;border:1.5px solid #152c4c;border-radius:6px;background:#214f8b"></div>
<svg style="left:1515px;top:285px" width="24" height="24" viewBox="0 0 24 24"><path d="M12 23C6.5 23 2.5 18.5 2.5 11.5 2.5 6 4.3 2.5 7.5 2.5 9.8 2.5 11 4.5 12 6.5 13 4.5 14.2 2.5 16.5 2.5 19.7 2.5 21.5 6 21.5 11.5 21.5 18.5 17.5 23 12 23z" fill="#8aa8d2"/></svg>
<div class="t" style="left:1079px;top:320px;font-size:15.5px;font-weight:bold;color:#ececec">Aucun objet</div>
<div class="t" style="left:1213px;top:726.5px;font-size:16px;color:#b4b4b4">Mode de fondu :</div>
<div class="a" style="left:1335px;top:715px;width:213px;height:43px;border:1.5px solid #1c1c1c;border-radius:7px;background:#2d2d2d"></div>
<div class="t" style="left:1350.5px;top:726px;font-size:16px;color:#b4b4b4">Normal</div>
<svg style="left:1518px;top:731px" width="16" height="10" viewBox="0 0 16 10"><path d="M0.5 0.5h15l-7.5 8.5z" fill="#b4b4b4"/></svg>
<div class="a" style="left:1072.5px;top:763.5px;width:473.5px;height:33.5px;border:1.5px solid #1c1c1c;border-radius:6px;background:#2d2d2d"></div>
<div class="a" style="left:1451px;top:764.5px;width:1.5px;height:31.5px;background:#1c1c1c"></div>
<div class="a" style="left:1500.5px;top:764.5px;width:1px;height:31.5px;background:#292929"></div>
<div class="a" style="left:1524px;top:764.5px;width:1px;height:31.5px;background:#292929"></div>
<div class="t" style="left:1078px;top:769.5px;font-size:16px;color:#b4b4b4">Flou (%)</div>
<div class="t" style="left:1460px;top:769.5px;font-size:16px;color:#b4b4b4">0,0</div>
<svg style="left:1504px;top:771.0px" width="17" height="17" viewBox="0 0 17 17"><path d="M0.5 8.5h15" stroke="#585858" stroke-width="2"/></svg>
<svg style="left:1527px;top:771.0px" width="17" height="17" viewBox="0 0 17 17"><path d="M0.5 8.5h15M8 1v15" stroke="#585858" stroke-width="2"/></svg>
<div class="a" style="left:1072.5px;top:804.5px;width:473.5px;height:33.5px;border:1.5px solid #1c1c1c;border-radius:6px;background:#2d2d2d"></div>
<div class="a" style="left:1451px;top:805.5px;width:1.5px;height:31.5px;background:#1c1c1c"></div>
<div class="a" style="left:1500.5px;top:805.5px;width:1px;height:31.5px;background:#292929"></div>
<div class="a" style="left:1524px;top:805.5px;width:1px;height:31.5px;background:#292929"></div>
<div class="t" style="left:1078px;top:810.5px;font-size:16px;color:#b4b4b4">Opacité (%)</div>
<div class="t" style="left:1460px;top:810.5px;font-size:16px;color:#b4b4b4">100,0</div>
<svg style="left:1504px;top:812.0px" width="17" height="17" viewBox="0 0 17 17"><path d="M0.5 8.5h15" stroke="#585858" stroke-width="2"/></svg>
<svg style="left:1527px;top:812.0px" width="17" height="17" viewBox="0 0 17 17"><path d="M0.5 8.5h15M8 1v15" stroke="#585858" stroke-width="2"/></svg>
<div class="a" style="left:981.5px;top:181px;width:209px;height:51px;border-radius:7px;background:rgba(8,8,8,0.93)"></div>
<div class="t" style="left:999px;top:197.5px;font-size:16px;color:#f4f4f4">Hauteur de la sélection</div>
<div class="a" style="left:0;top:853px;width:1556px;height:47px;background:#333333"></div>
<svg style="left:0;top:854.8px" width="1480" height="44" viewBox="0 0 1480 44"><rect x="0" y="0" width="1473" height="43.4" fill="#262626"/><rect x="-19.00" y="0" width="30.90" height="21" fill="#999999"/><rect x="-19.00" y="22.6" width="30.90" height="20.8" fill="#ff9955"/><rect x="13.50" y="0" width="30.10" height="21" fill="#b3b3b3"/><rect x="13.50" y="22.6" width="30.10" height="20.8" fill="#ffb380"/><rect x="45.20" y="0" width="30.10" height="21" fill="#cccccc"/><rect x="45.20" y="22.6" width="30.10" height="20.8" fill="#ffccaa"/><rect x="76.90" y="0" width="30.20" height="21" fill="#e6e6e6"/><rect x="76.90" y="22.6" width="30.20" height="20.8" fill="#ffe6d5"/><rect x="108.70" y="0" width="29.90" height="21" fill="#ececec"/><rect x="108.70" y="22.6" width="29.90" height="20.8" fill="#28170b"/><rect x="140.20" y="0" width="30.00" height="21" fill="#f2f2f2"/><rect x="140.20" y="22.6" width="30.00" height="20.8" fill="#502d16"/><rect x="171.80" y="0" width="30.10" height="21" fill="#f8f8f8"/><rect x="171.80" y="22.6" width="30.10" height="20.8" fill="#784421"/><rect x="203.50" y="0" width="30.40" height="21" fill="#ffffff"/><rect x="203.50" y="22.6" width="30.40" height="20.8" fill="#a05a2c"/><rect x="235.50" y="0" width="29.90" height="21" fill="#800000"/><rect x="235.50" y="22.6" width="29.90" height="20.8" fill="#c87137"/><rect x="267.00" y="0" width="30.00" height="21" fill="#ff0000"/><rect x="267.00" y="22.6" width="30.00" height="20.8" fill="#d38d5f"/><rect x="298.60" y="0" width="30.01" height="21" fill="#808000"/><rect x="298.60" y="22.6" width="30.01" height="20.8" fill="#deaa87"/><rect x="330.22" y="0" width="30.01" height="21" fill="#ffff00"/><rect x="330.22" y="22.6" width="30.01" height="20.8" fill="#e9c6af"/><rect x="361.83" y="0" width="30.01" height="21" fill="#008000"/><rect x="361.83" y="22.6" width="30.01" height="20.8" fill="#f4e3d7"/><rect x="393.45" y="0" width="30.01" height="21" fill="#00ff00"/><rect x="393.45" y="22.6" width="30.01" height="20.8" fill="#241f1c"/><rect x="425.06" y="0" width="30.01" height="21" fill="#008080"/><rect x="425.06" y="22.6" width="30.01" height="20.8" fill="#483e37"/><rect x="456.68" y="0" width="30.01" height="21" fill="#00ffff"/><rect x="456.68" y="22.6" width="30.01" height="20.8" fill="#6c5d53"/><rect x="488.29" y="0" width="30.01" height="21" fill="#000080"/><rect x="488.29" y="22.6" width="30.01" height="20.8" fill="#917c6f"/><rect x="519.90" y="0" width="30.01" height="21" fill="#0000ff"/><rect x="519.90" y="22.6" width="30.01" height="20.8" fill="#ac9d93"/><rect x="551.52" y="0" width="30.01" height="21" fill="#800080"/><rect x="551.52" y="22.6" width="30.01" height="20.8" fill="#c8beb7"/><rect x="583.13" y="0" width="30.01" height="21" fill="#ff00ff"/><rect x="583.13" y="22.6" width="30.01" height="20.8" fill="#e3dedb"/><rect x="614.75" y="0" width="30.05" height="21" fill="#2b0000"/><rect x="614.75" y="22.6" width="30.05" height="20.8" fill="#2b2200"/><rect x="646.40" y="0" width="30.10" height="21" fill="#550000"/><rect x="646.40" y="22.6" width="30.10" height="20.8" fill="#554400"/><rect x="678.10" y="0" width="30.05" height="21" fill="#800000"/><rect x="678.10" y="22.6" width="30.05" height="20.8" fill="#806600"/><rect x="709.75" y="0" width="30.25" height="21" fill="#aa0000"/><rect x="709.75" y="22.6" width="30.25" height="20.8" fill="#aa8800"/><rect x="741.60" y="0" width="30.30" height="21" fill="#d40000"/><rect x="741.60" y="22.6" width="30.30" height="20.8" fill="#d4aa00"/><rect x="773.50" y="0" width="29.65" height="21" fill="#ff0000"/><rect x="773.50" y="22.6" width="29.65" height="20.8" fill="#ffcc00"/><rect x="804.75" y="0" width="30.15" height="21" fill="#ff2a2a"/><rect x="804.75" y="22.6" width="30.15" height="20.8" fill="#ffd42a"/><rect x="836.50" y="0" width="29.40" height="21" fill="#ff5555"/><rect x="836.50" y="22.6" width="29.40" height="20.8" fill="#ffdd55"/><rect x="867.50" y="0" width="28.40" height="21" fill="#ff8080"/><rect x="867.50" y="22.6" width="28.40" height="20.8" fill="#ffe680"/><rect x="897.50" y="0" width="28.40" height="21" fill="#ffaaaa"/><rect x="897.50" y="22.6" width="28.40" height="20.8" fill="#ffeeaa"/><rect x="927.50" y="0" width="28.80" height="21" fill="#ffd5d5"/><rect x="927.50" y="22.6" width="28.80" height="20.8" fill="#fff6d5"/><rect x="957.90" y="0" width="28.58" height="21" fill="#280b0b"/><rect x="957.90" y="22.6" width="28.58" height="20.8" fill="#28220b"/><rect x="988.08" y="0" width="28.57" height="21" fill="#501616"/><rect x="988.08" y="22.6" width="28.57" height="20.8" fill="#504416"/><rect x="1018.25" y="0" width="28.90" height="21" fill="#782121"/><rect x="1018.25" y="22.6" width="28.90" height="20.8" fill="#786721"/><rect x="1048.75" y="0" width="28.65" height="21" fill="#a02c2c"/><rect x="1048.75" y="22.6" width="28.65" height="20.8" fill="#a0892c"/><rect x="1079.00" y="0" width="28.90" height="21" fill="#c83737"/><rect x="1079.00" y="22.6" width="28.90" height="20.8" fill="#c8ab37"/><rect x="1109.50" y="0" width="28.65" height="21" fill="#d35f5f"/><rect x="1109.50" y="22.6" width="28.65" height="20.8" fill="#d3bc5f"/><rect x="1139.75" y="0" width="28.65" height="21" fill="#de8787"/><rect x="1139.75" y="22.6" width="28.65" height="20.8" fill="#decd87"/><rect x="1170.00" y="0" width="28.80" height="21" fill="#e9afaf"/><rect x="1170.00" y="22.6" width="28.80" height="20.8" fill="#e9ddaf"/><rect x="1200.40" y="0" width="28.75" height="21" fill="#f4d7d7"/><rect x="1200.40" y="22.6" width="28.75" height="20.8" fill="#f4eed7"/><rect x="1230.75" y="0" width="28.90" height="21" fill="#241c1c"/><rect x="1230.75" y="22.6" width="28.90" height="20.8" fill="#24221c"/><rect x="1261.25" y="0" width="28.75" height="21" fill="#483737"/><rect x="1261.25" y="22.6" width="28.75" height="20.8" fill="#484537"/><rect x="1291.60" y="0" width="29.05" height="21" fill="#6c5353"/><rect x="1291.60" y="22.6" width="29.05" height="20.8" fill="#6c6753"/><rect x="1322.25" y="0" width="28.45" height="21" fill="#916f6f"/><rect x="1322.25" y="22.6" width="28.45" height="20.8" fill="#918a6f"/><rect x="1352.30" y="0" width="28.80" height="21" fill="#ac9393"/><rect x="1352.30" y="22.6" width="28.80" height="20.8" fill="#aca793"/><rect x="1382.70" y="0" width="28.60" height="21" fill="#c8b7b7"/><rect x="1382.70" y="22.6" width="28.60" height="20.8" fill="#c8c4b7"/><rect x="1412.90" y="0" width="28.70" height="21" fill="#e3dbdb"/><rect x="1412.90" y="22.6" width="28.70" height="20.8" fill="#e3e2db"/><rect x="1443.20" y="0" width="29.30" height="21" fill="#2b1100"/><rect x="1443.20" y="22.6" width="29.30" height="20.8" fill="#222b00"/></svg>
<svg style="left:1477px;top:869px" width="20" height="12" viewBox="0 0 20 12"><path d="M1.5 10l8.5-8.5 8.5 8.5" fill="none" stroke="#6e6e6e" stroke-width="2.2"/></svg>
<svg style="left:1507px;top:867px" width="20" height="12" viewBox="0 0 20 12"><path d="M1.5 1.5l8.5 8.5 8.5-8.5" fill="none" stroke="#ececec" stroke-width="2.2"/></svg>
<svg style="left:1535px;top:872px" width="21" height="18" viewBox="0 0 21 18"><path d="M0 2h20M0 9h20M0 16h20" stroke="#ececec" stroke-width="2.4"/></svg>
<div class="a" style="left:0;top:900px;width:1147px;height:25px;background:#303030"></div>
<div class="a" style="left:-10px;top:902px;width:98px;height:40px;border:1.5px solid #1c1c1c;border-radius:7px;background:#333333"></div>
<div class="a" style="left:43px;top:903px;width:1px;height:30px;background:#292929"></div>
<div class="a" style="left:65px;top:903px;width:1px;height:30px;background:#292929"></div>
<div class="t" style="left:4px;top:913px;font-size:16px;color:#8a8a8a">100</div>
<svg style="left:45px;top:916px" width="17" height="17" viewBox="0 0 17 17"><path d="M0.5 8.5h15" stroke="#585858" stroke-width="2"/></svg>
<svg style="left:68px;top:916px" width="17" height="17" viewBox="0 0 17 17"><path d="M0.5 8.5h15M8 1v15" stroke="#585858" stroke-width="2"/></svg>
<div class="a" style="left:103.5px;top:915px;width:3.5px;height:14px;background:#3a7ae0"></div>
<div class="t" style="left:115px;top:914.5px;font-size:16px;color:#e8e8e8">Calque 1</div>
<svg style="left:206px;top:914px" width="22" height="16" viewBox="0 0 22 16"><circle cx="11" cy="11" r="5.5" fill="none" stroke="#e8e8e8" stroke-width="2.4"/><path d="M11 1.5v3M3.5 4.5l2 2M18.5 4.5l-2 2M1 11h3M18 11h3" stroke="#e8e8e8" stroke-width="2.2"/></svg>
<svg style="left:256px;top:914px" width="20" height="16" viewBox="0 0 20 16"><rect x="1" y="8" width="12" height="10" fill="#e8e8e8"/><path d="M9 8V5a4 4 0 0 1 8 0v2" fill="none" stroke="#e8e8e8" stroke-width="2.4"/></svg>
<div class="t" style="left:300px;top:915px;font-size:16px;letter-spacing:0.05px;color:#e8e8e8"><b>Ctrl</b>: Sélectionner dans les groupes, Contraindre le déplacement à un axe; <b>Shift</b>: Ajouter à la sélection</div>
<div class="t" style="left:1154px;top:899.5px;font-size:15.8px;color:#e8e8e8">X :</div>
<div class="t" style="left:1190.5px;top:899.5px;font-size:15.8px;color:#e8e8e8">158,54</div>
<div class="t" style="left:1154px;top:918px;font-size:15.8px;color:#e8e8e8">Y :</div>
<div class="t" style="left:1197px;top:918px;font-size:15.8px;color:#e8e8e8">24,80</div>
<div class="t" style="left:1256px;top:913px;font-size:16px;color:#e8e8e8">Z :</div>
<div class="a" style="left:1279px;top:901.5px;width:109px;height:40px;border:1.5px solid #1c1c1c;border-radius:7px;background:#333333"></div>
<div class="a" style="left:1345px;top:903px;width:1px;height:30px;background:#292929"></div>
<div class="a" style="left:1366px;top:903px;width:1px;height:30px;background:#292929"></div>
<div class="t" style="left:1295px;top:913px;font-size:16px;color:#e8e8e8">48%</div>
<svg style="left:1346px;top:917px" width="18" height="17" viewBox="0 0 18 17"><path d="M0.5 8.5h16" stroke="#e8e8e8" stroke-width="2.4"/></svg>
<svg style="left:1368px;top:917px" width="18" height="17" viewBox="0 0 18 17"><path d="M0.5 8.5h16M8.5 0v17" stroke="#e8e8e8" stroke-width="2.4"/></svg>
<div class="t" style="left:1401.5px;top:913px;font-size:16px;color:#e8e8e8">R :</div>
<div class="a" style="left:1428px;top:901.5px;width:119px;height:40px;border:1.5px solid #1c1c1c;border-radius:7px;background:#333333"></div>
<div class="a" style="left:1503px;top:903px;width:1px;height:30px;background:#292929"></div>
<div class="a" style="left:1525px;top:903px;width:1px;height:30px;background:#292929"></div>
<div class="t" style="left:1448.5px;top:913px;font-size:16px;color:#e8e8e8">0,00°</div>
<svg style="left:1504px;top:917px" width="18" height="17" viewBox="0 0 18 17"><path d="M0.5 8.5h16" stroke="#e8e8e8" stroke-width="2.4"/></svg>
<svg style="left:1526px;top:917px" width="18" height="17" viewBox="0 0 18 17"><path d="M0.5 8.5h16M8.5 0v17" stroke="#e8e8e8" stroke-width="2.4"/></svg></body></html>
